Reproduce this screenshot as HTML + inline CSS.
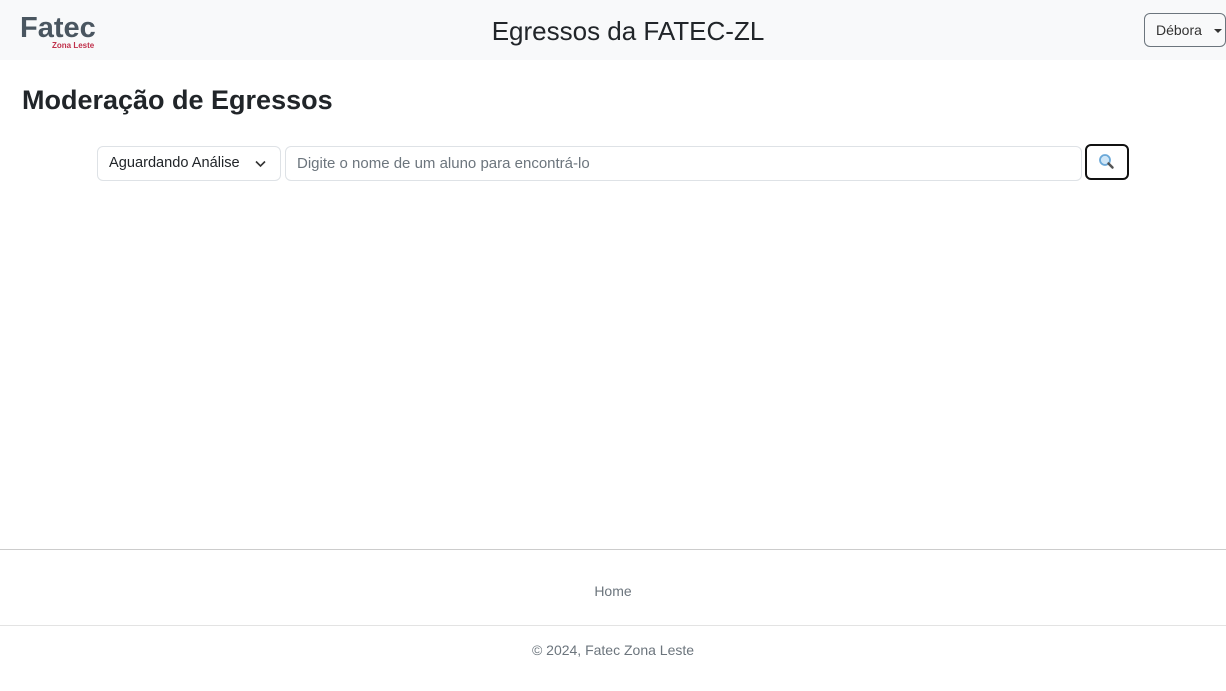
<!DOCTYPE html>
<html><head><meta charset="utf-8"><style>
*{box-sizing:border-box;margin:0;padding:0}
body{width:1226px;height:691px;background:#fff;font-family:"Liberation Sans",sans-serif;color:#212529;position:relative;overflow:hidden}
.nav{position:absolute;left:0;top:0;width:1226px;height:60px;background:#f8f9fa}
.logo{position:absolute;left:20px;top:13px;font-weight:bold;font-size:29px;color:#4a5660;letter-spacing:0;line-height:30px}
.logo2{position:absolute;left:52px;top:41px;font-size:8px;font-weight:bold;color:#c0304a}
.title{position:absolute;left:0;width:1256px;text-align:center;top:15px;font-size:26px;line-height:32px;color:#212529}
.user{position:absolute;left:1144px;top:13px;width:82px;height:34px;border:1px solid #6c757d;border-radius:6px;font-size:14px;line-height:32px;padding-left:11px;color:#333}
.user:after{content:"";position:absolute;right:3px;top:15px;border-left:4px solid transparent;border-right:4px solid transparent;border-top:4px solid #333}
h1{position:absolute;left:22px;top:83px;font-size:27px;font-weight:bold;line-height:34px}
.sel{position:absolute;left:97px;top:146px;width:184px;height:35px;border:1px solid #dee2e6;border-radius:6px;font-size:14.6px;line-height:33px;padding-left:11px}
.sel svg{position:absolute;right:14px;top:13px}
.inp{position:absolute;left:285px;top:146px;width:797px;height:35px;border:1px solid #dee2e6;border-radius:6px;font-size:15px;line-height:33px;padding-left:11px;color:#6c757d}
.btn{position:absolute;left:1085px;top:144px;width:44px;height:36px;border:2px solid #111;border-radius:6px}
.hr1{position:absolute;left:0;top:549px;width:1226px;border-top:1px solid #ccc}
.hr2{position:absolute;left:0;top:625px;width:1226px;border-top:1px solid #e3e3e3}
.home{position:absolute;left:0;width:1226px;text-align:center;top:583px;font-size:14px;color:#6c757d}
.copy{position:absolute;left:0;width:1226px;text-align:center;top:642px;font-size:14px;color:#6c757d}
</style></head><body>
<div class="nav"><div class="logo">Fatec</div><div class="logo2">Zona Leste</div>
<div class="title">Egressos da FATEC-ZL</div><div class="user">Débora</div></div>
<h1>Moderação de Egressos</h1>
<div class="sel">Aguardando Análise<svg width="11" height="8" viewBox="0 0 11 8"><path d="M1 1.5l4.5 4.5 4.5-4.5" stroke="#333" stroke-width="1.6" fill="none"/></svg></div>
<div class="inp">Digite o nome de um aluno para encontrá-lo</div>
<div class="btn"><svg width="40" height="32" viewBox="0 0 40 32"><circle cx="18" cy="14" r="5" fill="#cfe6f7" stroke="#6aa8d8" stroke-width="1.8"/><path d="M21.5 17.5l4 4" stroke="#555" stroke-width="2.5" stroke-linecap="round"/></svg></div>
<div class="hr1"></div><div class="home">Home</div><div class="hr2"></div>
<div class="copy">© 2024, Fatec Zona Leste</div>
</body></html>
